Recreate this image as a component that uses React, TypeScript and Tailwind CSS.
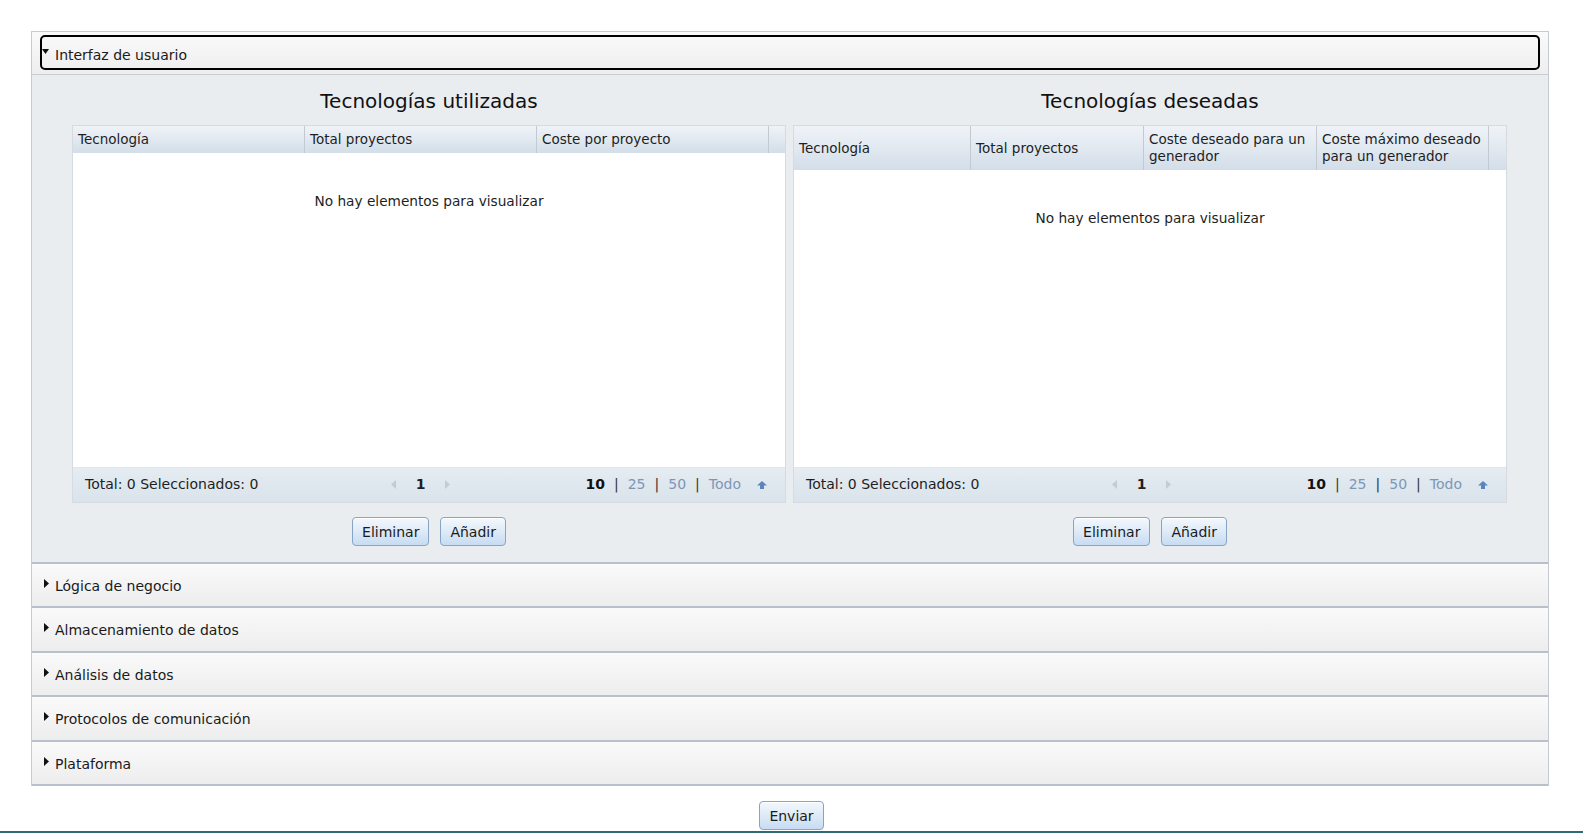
import React from "react";

function TriRight() {
  return (
    <svg width="5" height="9" viewBox="0 0 5 9" className="shrink-0">
      <path d="M0 0 L5 4.5 L0 9 Z" fill="#111" />
    </svg>
  );
}

function TriDown() {
  return (
    <svg width="7" height="5" viewBox="0 0 7 5" className="shrink-0">
      <path d="M0 0 L7 0 L3.5 5 Z" fill="#111" />
    </svg>
  );
}

function PagerArrow({ dir }: { dir: "l" | "r" }) {
  return (
    <svg width="5" height="9" viewBox="0 0 5 9" className="shrink-0">
      {dir === "l" ? (
        <path d="M5 0 L0 4.5 L5 9 Z" fill="#c3ccd6" />
      ) : (
        <path d="M0 0 L5 4.5 L0 9 Z" fill="#c3ccd6" />
      )}
    </svg>
  );
}

function UpArrow() {
  return (
    <svg width="10" height="8" viewBox="0 0 10 8" className="shrink-0">
      <path d="M5 0 L10 4.5 L7 4.5 L7 8 L3 8 L3 4.5 L0 4.5 Z" fill="#5a86bd" />
    </svg>
  );
}

function Btn({ children }: { children: React.ReactNode }) {
  return (
    <button className="h-[29px] px-[9px] rounded-[4px] border border-[#86a4c6] bg-gradient-to-b from-[#f4f8fd] to-[#c7dcf2] text-[14px] text-[#1a1a1a] leading-none shadow-[inset_0_1px_0_#ffffff]">
      {children}
    </button>
  );
}

type Col = { label: React.ReactNode; w: number };

function DataTable({ cols, headerH }: { cols: Col[]; headerH: number }) {
  return (
    <div className="w-[714px] h-[378px] border border-[#d6dbe1] bg-white flex flex-col">
      <div
        className="flex bg-gradient-to-b from-[#eff3f8] to-[#d3dee9] shrink-0"
        style={{ height: headerH }}
      >
        {cols.map((c, i) => (
          <div
            key={i}
            className="border-r border-[#c4c9cf] flex items-center pl-[5px] text-[13.5px] leading-[17px] text-[#1e1e1e]"
            style={{ width: c.w }}
          >
            {c.label}
          </div>
        ))}
        <div className="flex-1" />
      </div>
      <div className="flex-1 pt-[39px] text-center text-[13.7px] leading-[18px] text-[#1e1e1e]">
        No hay elementos para visualizar
      </div>
      <div className="h-[35px] shrink-0 bg-gradient-to-b from-[#e5ecf2] to-[#dae3eb] border-t border-[#e0e6ec] flex">
        <div className="w-[695px] grid grid-cols-[1fr_auto_1fr] items-center text-[14px] text-[#1e1e1e] pb-[1px]">
          <div className="pl-[12px]">Total: 0 Seleccionados: 0</div>
          <div className="flex items-center gap-[20px]">
            <PagerArrow dir="l" />
            <span className="font-bold">1</span>
            <PagerArrow dir="r" />
          </div>
          <div className="flex items-center justify-end pr-[1px]">
            <span className="font-bold text-[#111]">10</span>
            <span className="mx-[9px] text-[#333]">|</span>
            <span className="text-[#7d96b7]">25</span>
            <span className="mx-[9px] text-[#333]">|</span>
            <span className="text-[#7d96b7]">50</span>
            <span className="mx-[9px] text-[#333]">|</span>
            <span className="text-[#7d96b7]">Todo</span>
            <span className="ml-[16px] flex items-center">
              <UpArrow />
            </span>
          </div>
        </div>
      </div>
    </div>
  );
}

function AccRow({ label, tall }: { label: string; tall?: boolean }) {
  return (
    <div
      className={
        (tall ? "h-[45px] " : "h-[44px] ") +
        "border-t-2 border-[#b9bfcb] bg-gradient-to-b from-[#fafafa] to-[#ededed] flex items-center pl-[12px] pt-[2px] text-[14px] text-[#1a1a1a]"
      }
    >
      <span className="-mt-[6px] mr-[6px]">
        <TriRight />
      </span>
      <span>{label}</span>
    </div>
  );
}

export default function App() {
  const leftCols: Col[] = [
    { label: "Tecnología", w: 232 },
    { label: "Total proyectos", w: 232 },
    { label: "Coste por proyecto", w: 232 },
  ];
  const rightCols: Col[] = [
    { label: "Tecnología", w: 177 },
    { label: "Total proyectos", w: 173 },
    { label: "Coste deseado para un generador", w: 173 },
    { label: "Coste máximo deseado para un generador", w: 172 },
  ];
  return (
    <div className="w-[1583px] h-[833px] bg-white overflow-hidden font-['DejaVu_Sans',Verdana,sans-serif] pt-[31px] flex flex-col">
      <div className="ml-[31px] w-[1518px] border-x border-t border-[#c6cbd3]">
        <div className="h-[43px] border-b border-[#c8ccd3] bg-gradient-to-b from-[#fafafa] to-[#eeeeee] pt-[3px] px-[8px]">
          <div className="h-[35px] border-2 border-black rounded-[5px] flex items-center text-[14px] text-[#1a1a1a]">
            <span className="self-start mt-[12px] mr-[6px]">
              <TriDown />
            </span>
            <span className="mt-[5px]">Interfaz de usuario</span>
          </div>
        </div>
        <div className="h-[487px] bg-[#e9edf0] pl-[40px] pr-[41px] flex gap-[7px]">
          <div className="flex flex-col w-[714px]">
            <div className="h-[50px] flex items-center justify-center text-[20px] text-[#111] pt-[2px]">
              Tecnologías utilizadas
            </div>
            <DataTable cols={leftCols} headerH={27} />
            <div className="mt-[14px] flex justify-center gap-[11px]">
              <Btn>Eliminar</Btn>
              <Btn>Añadir</Btn>
            </div>
          </div>
          <div className="flex flex-col w-[714px]">
            <div className="h-[50px] flex items-center justify-center text-[20px] text-[#111] pt-[2px]">
              Tecnologías deseadas
            </div>
            <DataTable cols={rightCols} headerH={44} />
            <div className="mt-[14px] flex justify-center gap-[11px]">
              <Btn>Eliminar</Btn>
              <Btn>Añadir</Btn>
            </div>
          </div>
        </div>
        <AccRow label="Lógica de negocio" />
        <AccRow label="Almacenamiento de datos" tall />
        <AccRow label="Análisis de datos" />
        <AccRow label="Protocolos de comunicación" tall />
        <AccRow label="Plataforma" />
        <div className="border-t-2 border-[#b9bfcb]" />
      </div>
      <div className="mt-[15px] flex justify-center">
        <Btn>Enviar</Btn>
      </div>
      <div className="mt-[1px] border-t-2 border-[#2e6b78]" />
    </div>
  );
}
